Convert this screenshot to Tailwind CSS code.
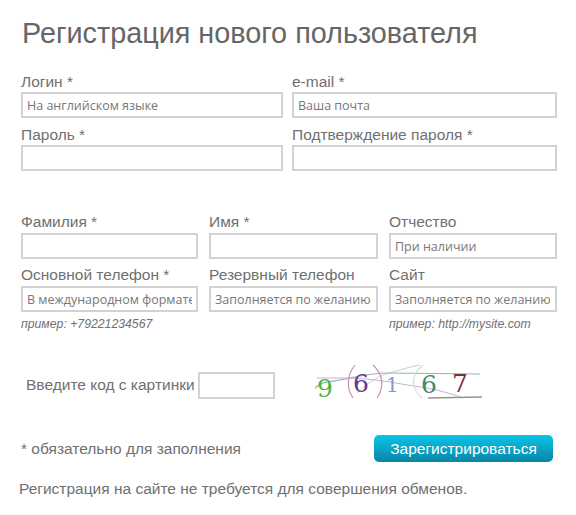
<!DOCTYPE html>
<html lang="ru">

<head>
  <meta charset="UTF-8" />
  <title>Регистрация</title>
  <script src="https://cdn.jsdelivr.net/npm/@tailwindcss/browser@4"></script>
</head>

<body class="bg-white font-['Liberation_Sans',sans-serif] text-[#707070] w-[576px] h-[515px] overflow-hidden">
  <div class="pl-[21px] pr-[19px] pt-[17px]">
    <h1 class="text-[28.8px] leading-[32px] text-[#666] pl-[1px]">Регистрация нового пользователя</h1>

    <!-- Account -->
    <div class="grid grid-cols-[262px_265px] gap-x-[9px] mt-[24px] text-[15.5px] leading-[20px]
      [&_label]:block [&_label]:h-[17px] [&_label]:-mt-[1px] [&_input]:block [&_input]:w-full [&_input]:h-[26px] [&_input]:border-2 [&_input]:border-[#d2d2d2] [&_input]:px-[4px] [&_input]:pt-[1px] [&_input]:mt-[3px] [&_input]:mb-[8px] [&_input]:font-['Open_Sans'] [&_input]:text-[12.5px] [&_input]:placeholder:text-[#777]">
      <div>
        <label>Логин *</label>
        <input type="text" placeholder="На английском языке">
      </div>
      <div>
        <label>e-mail *</label>
        <input type="text" placeholder="Ваша почта">
      </div>
      <div>
        <label>Пароль *</label>
        <input type="password">
      </div>
      <div>
        <label>Подтверждение пароля *</label>
        <input type="password">
      </div>
    </div>

    <!-- Personal -->
    <div class="grid grid-cols-[177px_169px_168px] gap-x-[11px] mt-[35px] text-[15.5px] leading-[20px]
      [&_label]:block [&_label]:h-[17px] [&_label]:-mt-[2px] [&_input]:block [&_input]:w-full [&_input]:h-[26px] [&_input]:border-2 [&_input]:border-[#d2d2d2] [&_input]:px-[4px] [&_input]:mt-[4px] [&_input]:mb-[8px] [&_input]:font-['Open_Sans'] [&_input]:text-[12.5px] [&_input]:placeholder:text-[#777]">
      <div>
        <label>Фамилия *</label>
        <input type="text">
      </div>
      <div>
        <label>Имя *</label>
        <input type="text">
      </div>
      <div>
        <label>Отчество</label>
        <input type="text" placeholder="При наличии">
      </div>
      <div>
        <label>Основной телефон *</label>
        <input type="text" placeholder="В международном формате" class="!mb-[5px]">
        <p class="text-[12.25px] leading-[14px] italic">пример: +79221234567</p>
      </div>
      <div>
        <label>Резервный телефон</label>
        <input type="text" placeholder="Заполняется по желанию" class="!mb-[5px]">
      </div>
      <div>
        <label>Сайт</label>
        <input type="text" placeholder="Заполняется по желанию" class="!mb-[5px]">
        <p class="text-[12.25px] leading-[14px] italic">пример: http://mysite.com</p>
      </div>
    </div>

    <!-- Captcha -->
    <div class="flex items-center mt-[29px] pl-[5px] h-[50px]">
      <span class="text-[15.5px] w-[172px] whitespace-nowrap">Введите код с картинки</span>
      <input type="text" class="w-[77px] h-[27px] border-2 border-[#d2d2d2]">
      <svg class="ml-[36px] w-[175px] h-[50px]" viewBox="0 0 175 50" fill="none">
        <path d="M46 33 C55 24 62 20 72 15 C85 11 98 7 109 5" stroke="#b5d3b5" stroke-width="0.9"/>
        <path d="M4 28 C12 20 22 22 29 20 C45 17 60 13 76 13 L169 14" stroke="#8fb2c9" stroke-width="1.2"/>
        <path d="M6 18 H30 C50 18 65 20 79 22 C95 25 112 27 126 30 C136 33 145 35 152 38" stroke="#cdb0cf" stroke-width="1"/>
        <path d="M44 5 C36 15 35 28 42 38" stroke="#c98fb0" stroke-width="1.2"/>
        <path d="M62 5 C73 15 73 28 66 38" stroke="#c98fb0" stroke-width="1.2"/>
        <path d="M112 5 C100 14 99 28 111 38" stroke="#d5e0cb" stroke-width="1.2"/>
        <path d="M117 38 L171 37" stroke="#8f9a84" stroke-width="1.4"/>
        <g font-family="'DejaVu Serif',serif">
          <text x="6" y="37" fill="#48b83c" font-size="25">9</text>
          <text x="42" y="32" fill="#63388f" font-size="25">6</text>
          <text x="75" y="32" fill="#7f9cc0" font-size="20">1</text>
          <text x="110" y="33" fill="#3f8b6d" font-size="25">6</text>
          <text x="141" y="32" fill="#7a2f42" font-size="25">7</text>
        </g>
      </svg>
    </div>

    <!-- Submit -->
    <div class="flex items-center justify-between mt-[25px] pr-[4px]">
      <span class="text-[15.5px]">* обязательно для заполнения</span>
      <button class="w-[179px] h-[27px] rounded-[5px] bg-gradient-to-b from-[#0bc4e6] to-[#0887a8] text-white text-[15.5px]">Зарегистрироваться</button>
    </div>

    <p class="text-[15.5px] leading-[22px] mt-[16px] -ml-[2px] whitespace-nowrap">Регистрация на сайте не требуется для совершения обменов.</p>
  </div>
</body>

</html>
